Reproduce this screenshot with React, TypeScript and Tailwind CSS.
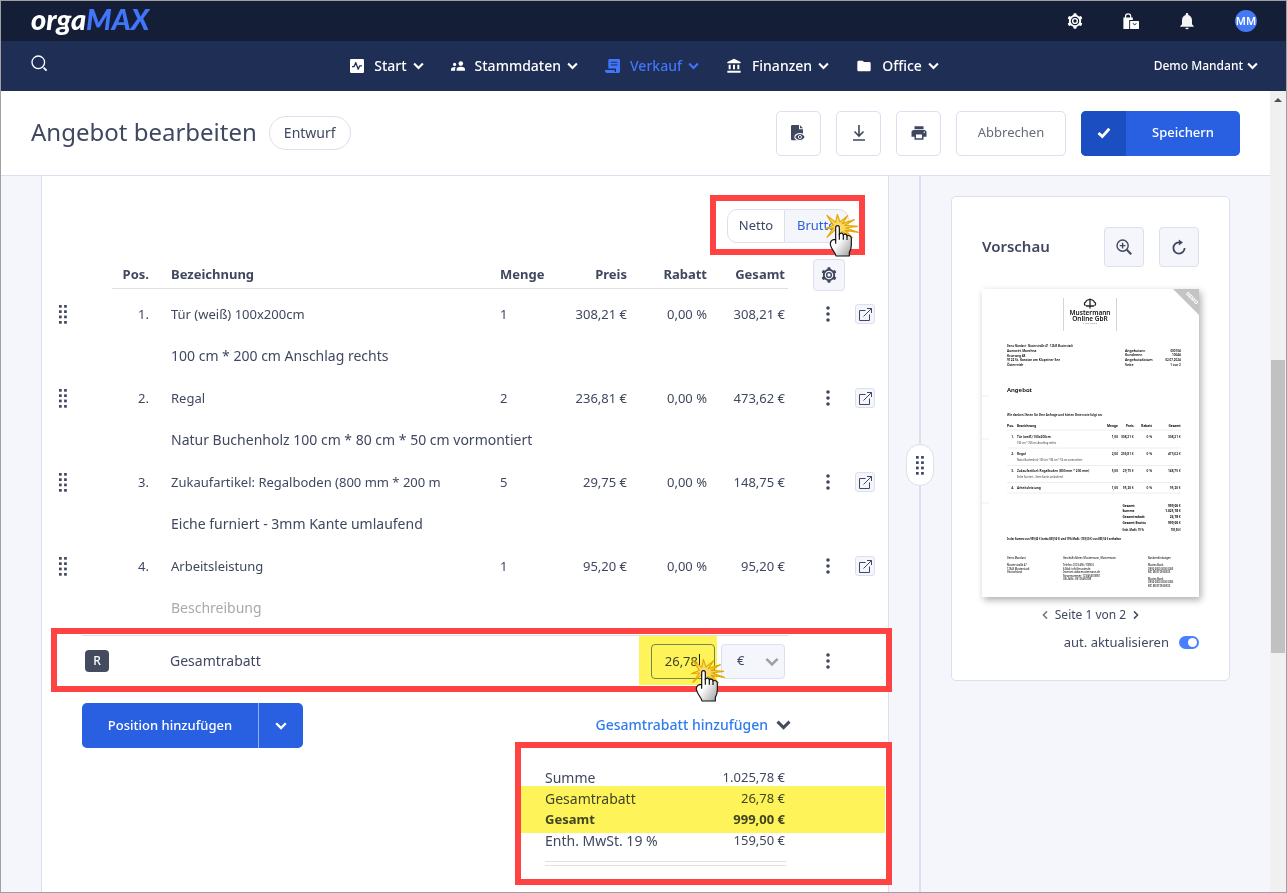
import React from "react";
import { MdAccountBalance, MdFolder, MdNotifications, MdPrint } from "react-icons/md";

function Chevron({ className, width = 2 }: { className?: string; width?: number }) {
  return (
    <svg viewBox="0 0 12 8" fill="none" stroke="currentColor" strokeWidth={width} className={className} aria-hidden="true">
      <path d="M1.2 1.3 6 6.1l4.8-4.8" />
    </svg>
  );
}

function GearIcon() {
  return (
    <svg viewBox="0 0 16 16" fill="none" stroke="currentColor" className="size-4" aria-hidden="true">
      <circle cx="8" cy="8" r="5.200" strokeWidth="1.900" />
      {[0, 60, 120, 180, 240, 300].map((angle) => (
        <path key={angle} d="M6.400 2.800V1.200a.9.900 0 0 1 .9-.9h1.400a.9.900 0 0 1 .9.900v1.600z" transform={`rotate(${angle} 8 8)`} fill="currentColor" stroke="none" />
      ))}
      <circle cx="8" cy="8" r="2.400" strokeWidth="1.400" />
    </svg>
  );
}

function PulseIcon() {
  return (
    <svg viewBox="0 0 14 14" className="size-3.5" aria-hidden="true">
      <rect width="14" height="14" rx="1.2" fill="currentColor" />
      <path d="M2 7.600h2.200l1.600-4 2.400 6.600 1.500-3.400h2.300" fill="none" stroke="#1f2e55" strokeWidth="1.300" strokeLinejoin="round" />
    </svg>
  );
}

function PeopleIcon() {
  return (
    <svg viewBox="0 0 14 14" fill="currentColor" className="size-3.5" aria-hidden="true">
      <circle cx="9.800" cy="4.600" r="2.300" />
      <circle cx="3.600" cy="5.400" r="1.600" />
      <path d="M5.600 11.800V10c0-1.500 2.200-2.200 4.200-2.200S14 8.500 14 10v1.800z" />
      <path d="M0 11.800v-1.600C0 8.700 2 8 4.800 8.100c-.6.600-.7 1.200-.7 2v1.700z" />
    </svg>
  );
}

function ScrollIcon() {
  return (
    <svg viewBox="0 0 15 14" className="h-3.5 w-[15px]" aria-hidden="true">
      <path d="M3.300 9.500V1.200C3.300.5 3.800 0 4.500 0h9.300c.7 0 1.200.5 1.200 1.200v11c0 1-.8 1.800-1.800 1.800H2c-1.100 0-2-.9-2-2v-1h9.500v.6c0 1 .7 1.600 1.500 1.600V9.500z" fill="currentColor" />
      <path d="M5.800 3.200h6.600M5.800 6h6.600" stroke="#1f2e55" strokeWidth="1.100" />
    </svg>
  );
}

function BagsIcon() {
  return (
    <svg viewBox="0 0 16 16" className="size-4" aria-hidden="true">
      <path d="M2.500 5V3.500a2.600 2.600 0 0 1 5.200 0V5" fill="none" stroke="currentColor" strokeWidth="1.200" />
      <path d="M.4 4.600h9.400V7H6.200v9H.4z" fill="currentColor" />
      <rect x="7.100" y="8" width="8.900" height="8" rx=".5" fill="currentColor" />
      <path d="M10.200 10.200c.2 2 2.700 2 2.900 0" fill="none" stroke="#151e37" strokeWidth="1" />
    </svg>
  );
}

function FileEyeIcon() {
  return (
    <svg viewBox="0 0 15 16" className="h-4 w-[15px]" aria-hidden="true">
      <path d="M1.300 0H8v4.300h4v11H1.300A1.300 1.300 0 0 1 0 14V1.300C0 .6.600 0 1.300 0z" fill="currentColor" />
      <path d="M9 .3v3h3z" fill="currentColor" />
      <ellipse cx="8.900" cy="12" rx="5.600" ry="4" fill="#fff" />
      <path d="M4.200 12c2-4 7.400-4 9.400 0-2 4-7.400 4-9.400 0z" fill="currentColor" />
      <circle cx="8.900" cy="12" r="1.600" fill="none" stroke="#fff" strokeWidth=".9" />
    </svg>
  );
}

function DownloadIcon() {
  return (
    <svg viewBox="0 0 14 16" fill="none" stroke="currentColor" strokeWidth="1.600" className="h-4 w-3.5" aria-hidden="true">
      <path d="M7 0v11M2.500 6.500 7 11l4.500-4.500M1 15h12" />
    </svg>
  );
}

function CheckIcon() {
  return (
    <svg viewBox="0 0 14 12" fill="none" stroke="currentColor" strokeWidth="2.800" className="h-3 w-3.5" aria-hidden="true">
      <path d="M1.500 6 5.300 9.600 12.300 1.800" />
    </svg>
  );
}

function SearchIcon() {
  return (
    <svg viewBox="0 0 17 17" fill="none" stroke="currentColor" strokeWidth="1.300" className="size-[17px]" aria-hidden="true">
      <circle cx="7.300" cy="7.300" r="6.300" />
      <path d="m12.600 12.600 3 3" strokeWidth="1.800" />
    </svg>
  );
}

function ZoomInIcon() {
  return (
    <svg viewBox="0 0 16 16" fill="none" stroke="currentColor" strokeWidth="1.400" className="size-4" aria-hidden="true">
      <circle cx="6.600" cy="6.600" r="5.600" />
      <path d="M6.600 3.800v5.600M3.800 6.600h5.600" />
      <path d="m10.800 10.800 4.400 4.400" strokeWidth="2" />
    </svg>
  );
}

function ReloadIcon() {
  return (
    <svg viewBox="0 0 14 16" className="h-4 w-3.5" aria-hidden="true">
      <path d="M8 3.400H6.800A5.600 5.600 0 1 0 12.600 9" fill="none" stroke="currentColor" strokeWidth="1.800" />
      <path d="M6.800.4v6l4.200-3z" fill="currentColor" />
    </svg>
  );
}

function ExternalIcon() {
  return (
    <svg viewBox="0 0 13 13" fill="none" stroke="currentColor" strokeWidth="1" className="size-[13px]" aria-hidden="true">
      <path d="M6.500 2.500h-6v10h10v-6M8 .5h4.500V5M12.500.5l-8 8" />
    </svg>
  );
}

function GripIcon() {
  return (
    <svg viewBox="0 0 8 19" fill="currentColor" className="h-[19px] w-2" aria-hidden="true">
      {[0, 5.300, 10.600, 16].map((y) => (
        <g key={y}>
          <rect x="0" y={y} width="2.700" height="2.700" />
          <rect x="5.100" y={y} width="2.700" height="2.700" />
        </g>
      ))}
    </svg>
  );
}

function DotsIcon() {
  return (
    <svg viewBox="0 0 4 16" fill="currentColor" className="h-4 w-1" aria-hidden="true">
      <circle cx="2" cy="2" r="1.800" />
      <circle cx="2" cy="8" r="1.800" />
      <circle cx="2" cy="14" r="1.800" />
    </svg>
  );
}

function ClickHand({ className }: { className: string }) {
  return (
    <svg viewBox="0 0 105 135" className={className} aria-hidden="true">
      <defs>
        <linearGradient id="hand" x1="0" y1="0" x2="1" y2="1">
          <stop offset=".45" stopColor="#fff" />
          <stop offset="1" stopColor="#9b9b9b" />
        </linearGradient>
      </defs>
      <path
        d="M31 50 6 73l19-28L1 47l24-10L6 7l26 21L37 4l8 23L68 8 52 32 88 20 60 37l38 3-36 5 38 13-40-6 22 22-30-18-8 12-8-12z"
        fill="#f8d96a"
        stroke="#e5a800"
        strokeWidth="3.500"
        strokeLinejoin="round"
      />
      <path
        d="M32 80V44c0-8 11-8 11 0v21c2-7 11-6 12 1 3-5 11-3 11 3 4-3 13-1 13 7v20c0 12-3 17-6 22v11H33c-2-12-18-24-17-38 1-9 9-12 16-12z"
        fill="url(#hand)"
        stroke="#111"
        strokeWidth="3.500"
        strokeLinejoin="round"
      />
      <path d="M32 80v12M43 62v18M55 66v14M66 69v12" fill="none" stroke="#111" strokeWidth="3.500" />
    </svg>
  );
}

const frame = "pointer-events-none absolute border-6 border-[#ff4242]";

const navItems = [
  { label: "Start", icon: <PulseIcon /> },
  { label: "Stammdaten", icon: <PeopleIcon /> },
  { label: "Verkauf", icon: <ScrollIcon />, active: true },
  { label: "Finanzen", icon: <MdAccountBalance className="size-4" /> },
  { label: "Office", icon: <MdFolder className="size-4" /> },
];

const positions = [
  { pos: "1.", name: "Tür (weiß) 100x200cm", qty: "1", price: "308,21 €", discount: "0,00 %", total: "308,21 €", text: "100 cm * 200 cm Anschlag rechts" },
  { pos: "2.", name: "Regal", qty: "2", price: "236,81 €", discount: "0,00 %", total: "473,62 €", text: "Natur Buchenholz 100 cm * 80 cm * 50 cm vormontiert" },
  { pos: "3.", name: "Zukaufartikel: Regalboden (800 mm * 200 m", qty: "5", price: "29,75 €", discount: "0,00 %", total: "148,75 €", text: "Eiche furniert - 3mm Kante umlaufend" },
  { pos: "4.", name: "Arbeitsleistung", qty: "1", price: "95,20 €", discount: "0,00 %", total: "95,20 €", text: "" },
];

function TopBar() {
  return (
    <header className="shrink-0 text-white">
      <div className="flex h-10 items-center justify-between bg-[#151e37] pr-[29px] pl-[30px]">
        <a href="#" className="pb-1 font-[Lato,sans-serif] text-[29px] leading-8 font-black italic">
          orga<span className="text-[#4176fb]">MAX</span>
        </a>
        <div className="flex items-center gap-9">
          <button aria-label="Einstellungen" className="grid size-5 place-items-center"><GearIcon /></button>
          <button aria-label="Shop" className="grid size-5 place-items-center"><BagsIcon /></button>
          <button aria-label="Mitteilungen" className="grid size-5 place-items-center text-gray-100"><MdNotifications className="size-5" /></button>
          <button className="ml-0.5 grid size-[22px] place-items-center rounded-full bg-[#4478f5] text-[11px] leading-4 font-semibold">MM</button>
        </div>
      </div>
      <div className="flex h-[50px] items-center bg-[#1f2e55] pr-7 pl-[30px]">
        <div className="flex flex-1 pb-1.5"><button aria-label="Suchen"><SearchIcon /></button></div>
        <nav className="flex items-center gap-[27px]">
          {navItems.map((item) => (
            <a key={item.label} href="#" className={item.active ? "flex items-center gap-1.5 text-[#4176fb]" : "flex items-center gap-1.5"}>
              <span className="mr-1 flex">{item.icon}</span>
              <span className="text-sm font-medium">{item.label}</span>
              <Chevron width={2.3} className="h-2 w-[11px]" />
            </a>
          ))}
        </nav>
        <div className="flex flex-1 justify-end">
          <button className="flex items-center gap-1 text-xs font-medium">
            Demo Mandant <Chevron width={2.3} className="h-2 w-[11px]" />
          </button>
        </div>
      </div>
    </header>
  );
}

const toolButton = "grid size-[45px] place-items-center rounded-[5px] border border-[#dcdfed] bg-white";

function TitleBar() {
  return (
    <div className="flex h-[85px] shrink-0 items-center justify-between border-b border-[#dcdfed] bg-white px-[30px]">
      <div className="flex items-center gap-3">
        <h1 className="pb-0.5 text-2xl leading-8">Angebot bearbeiten</h1>
        <span className="rounded-full border border-[#dcdfed] px-3.5 py-1.5 text-sm leading-5">Entwurf</span>
      </div>
      <div className="flex items-center gap-[15px]">
        <button aria-label="Vorschau anzeigen" className={toolButton}><FileEyeIcon /></button>
        <button aria-label="Herunterladen" className={toolButton}><DownloadIcon /></button>
        <button aria-label="Drucken" className={toolButton}><MdPrint className="size-[18px]" /></button>
        <button className="h-[45px] w-[110px] rounded-[5px] border border-[#dcdfed] text-[13px] text-[#666b78]">Abbrechen</button>
        <button className="flex h-[45px] items-center overflow-hidden rounded-[5px] bg-[#2860e1] text-[13px] font-medium text-white">
          <span className="grid h-full w-[45px] place-items-center bg-[#1b4fc1]"><CheckIcon /></span>
          <span className="w-[114px]">Speichern</span>
        </button>
      </div>
    </div>
  );
}

const headCell = "h-[30px] border-b border-[#e0e0e0] pt-[5px]";

function PositionTable() {
  return (
    <table className="w-full table-fixed text-[13px] leading-5">
      <colgroup>
        <col className="w-[70px]" />
        <col className="w-12" />
        <col />
        <col className="w-[60px]" />
        <col className="w-[67px]" />
        <col className="w-20" />
        <col className="w-[81px]" />
        <col className="w-[100px]" />
      </colgroup>
      <thead>
        <tr className="h-[34px] align-top">
          <td />
          <th><div className={`${headCell} pr-[11px] text-right`}>Pos.</div></th>
          <th><div className={`${headCell} pl-[11px] text-left`}>Bezeichnung</div></th>
          <th><div className={`${headCell} text-left`}>Menge</div></th>
          <th><div className={`${headCell} text-right`}>Preis</div></th>
          <th><div className={`${headCell} text-right`}>Rabatt</div></th>
          <th><div className={`${headCell} pr-[3px] text-right`}>Gesamt</div></th>
          <td className="pl-[25px]">
            <button aria-label="Spalten einstellen" className="grid size-8 place-items-center rounded-[4px] border border-[#dcdfed] bg-[#f5f6fb]">
              <GearIcon />
            </button>
          </td>
        </tr>
      </thead>
      <tbody>
        {positions.map((p) => (
          <React.Fragment key={p.pos}>
            <tr className="h-[42px]">
              <td className="pl-[17px]"><GripIcon /></td>
              <td className="pr-[11px] text-right">{p.pos}</td>
              <td className="pl-[11px] whitespace-nowrap">{p.name}</td>
              <td>{p.qty}</td>
              <td className="text-right">{p.price}</td>
              <td className="text-right">{p.discount}</td>
              <td className="pr-[3px] text-right">{p.total}</td>
              <td>
                <div className="flex items-center gap-[11px] pl-6">
                  <button aria-label="Aktionen" className="grid h-5 w-8 place-items-center"><DotsIcon /></button>
                  <button aria-label="Artikel öffnen" className="grid size-5 place-items-center rounded-[3px] border border-[#dcdfed] bg-[#f5f6fb]"><ExternalIcon /></button>
                </div>
              </td>
            </tr>
            <tr className="h-[42px] text-sm">
              <td />
              <td />
              <td colSpan={5} className="pl-[11px]">
                {p.text || <input aria-label="Beschreibung" placeholder="Beschreibung" className="block w-full leading-5 outline-none placeholder:text-[#a9a9a9]" />}
              </td>
              <td />
            </tr>
          </React.Fragment>
        ))}
      </tbody>
    </table>
  );
}

function Editor() {
  return (
    <section className="min-w-0 flex-1 border-x border-[#dcdfed] bg-white pt-[33px]">
      <div className="mb-4 flex justify-end pr-[39px]">
        <div className="relative flex h-[34px] text-[13px]">
          <button className="w-[58px] rounded-l-[10px] border border-[#dcdfed]">Netto</button>
          <button className="w-16 rounded-r-[10px] border border-l-0 border-[#dcdfed] bg-[#f5f6fb] text-[#2860e1]">Brutto</button>
          <div className={`${frame} -top-3.5 -right-4 -bottom-3 -left-[17px]`} />
          <ClickHand className="pointer-events-none absolute top-1 left-[98px] h-[45px] w-[35px]" />
        </div>
      </div>

      <PositionTable />

      <div className="relative mt-1.5 flex h-[51px] items-center pt-px pr-[103px] pl-10">
        <div className="absolute top-0 right-[100px] left-10 h-px bg-[#e0e0e0]" />
        <span className="ml-[3px] grid h-[22px] w-6 place-items-center rounded-[4px] bg-[#444b5f] text-xs font-medium text-white">R</span>
        <label htmlFor="discount" className="ml-[61px] flex-1 text-sm">Gesamtrabatt</label>
        <div className="relative flex text-[13px]">
          <input id="discount" defaultValue="26,78" className="h-[35px] w-16 rounded-[4px] border border-[#728fd0] pr-4 text-right outline-none" />
          <div className="absolute top-2.5 right-[15px] h-3.5 w-px bg-[#222]" />
          <div className="pointer-events-none absolute -top-2 -right-0.5 -bottom-1.5 -left-3 bg-[#fff35a] mix-blend-multiply" />
          <ClickHand className="pointer-events-none absolute top-3.5 left-10 z-10 h-[45px] w-[35px]" />
        </div>
        <div className="relative ml-1.5">
          <select aria-label="Einheit" className="block h-[35px] w-16 appearance-none rounded-[4px] border border-[#dcdfed] bg-[#f5f6fb] pl-[15px] text-[13px]">
            <option>€</option>
            <option>%</option>
          </select>
          <Chevron width={2.2} className="pointer-events-none absolute top-[13px] right-1.5 h-2.5 w-3.5 text-[#a0a0a0]" />
        </div>
        <button aria-label="Aktionen" className="absolute right-11 grid h-5 w-8 place-items-center"><DotsIcon /></button>
        <div className={`${frame} -top-[7px] -right-1 -bottom-1.5 left-[9px]`} />
      </div>

      <div className="mt-[17px] flex items-center justify-between pr-[97px] pl-10">
        <div className="flex h-[45px] overflow-hidden rounded-[5px] bg-[#2860e1] text-[13px] font-medium text-white">
          <button className="w-44">Position hinzufügen</button>
          <button aria-label="Weitere Positionsarten" className="grid w-[45px] place-items-center border-l border-[#93aff0]"><Chevron width={2.3} className="h-2 w-3" /></button>
        </div>
        <button className="flex items-center gap-2 pb-0.5 text-sm font-medium text-[#2f7cee]">
          Gesamtrabatt hinzufügen <Chevron width={2.4} className="h-2.5 w-[15px] text-[#444b5f]" />
        </button>
      </div>

      <div className="relative mt-[19px] mr-[102px] ml-auto w-[241px]">
        <table className="w-full text-[13px] leading-[21px]">
          <tbody>
            <tr><td className="text-sm leading-[21px]">Summe</td><td className="pr-px text-right">1.025,78 €</td></tr>
            <tr><td className="text-sm leading-[21px]">Gesamtrabatt</td><td className="pr-px text-right">26,78 €</td></tr>
            <tr className="font-bold"><td>Gesamt</td><td className="pr-px text-right">999,00 €</td></tr>
            <tr><td className="text-sm leading-[21px]">Enth. MwSt. 19 %</td><td className="pr-px text-right">159,50 €</td></tr>
          </tbody>
        </table>
        <div className="mt-2.5 h-[5px] border-y border-[#e0e0e0]" />
        <div className="pointer-events-none absolute top-[19px] -right-[99px] -left-6 h-[47px] bg-[#fff35a] mix-blend-multiply" />
        <div className={`${frame} -top-[25px] -right-[106px] -bottom-[19px] -left-[30px]`} />
      </div>
    </section>
  );
}

const miniRows = [
  { y: 148.500, pos: "1.", name: "Tür (weiß) 100x200cm", qty: "1,00", price: "308,21 €", total: "308,21 €", text: "100 cm * 200 cm Anschlag rechts" },
  { y: 165.700, pos: "2.", name: "Regal", qty: "2,00", price: "236,81 €", total: "473,62 €", text: "Natur Buchenholz 100 cm * 80 cm * 50 cm vormontiert" },
  { y: 182.700, pos: "3.", name: "Zukaufartikel: Regalboden (800 mm * 200 mm)", qty: "5,00", price: "29,75 €", total: "148,75 €", text: "Eiche furniert - 3mm Kante umlaufend" },
  { y: 199.700, pos: "4.", name: "Arbeitsleistung", qty: "1,00", price: "95,20 €", total: "95,20 €", text: "" },
];

function MiniLines({ x, y, step, lines }: { x: number; y: number; step: number; lines: string[] }) {
  return (
    <>
      {lines.map((line, i) => (
        <text key={i} x={x} y={y + i * step}>{line}</text>
      ))}
    </>
  );
}

function DocumentThumbnail() {
  return (
    <svg viewBox="0 0 217 308" role="img" aria-label="Angebot, Seite 1" className="mt-[22px] block w-full bg-white font-['Noto_Sans',sans-serif] shadow-[2px_3px_7px_rgba(0,0,0,0.32)]">
      <path d="M191 0h26v26z" fill="#c4c4c4" />
      <text transform="translate(203.500 5) rotate(45)" fontSize="5" fontWeight="800" fill="#fff">DEMO</text>
      <path d="M81.500 9v33M134.500 9v33" stroke="#d4d4d4" strokeWidth="1" />
      <path
        d="M108 9.500v10M104 17h8M103.500 16.800c-1.500-.8-1.500-3.300.2-3.600.5-2.200 3-2.800 4.300-2.400 1.300-.4 3.800.2 4.300 2.400 1.700.3 1.700 2.800.2 3.600"
        fill="none"
        stroke="#222"
        strokeWidth="1.300"
      />
      <g textAnchor="middle" fill="#111">
        <text fontSize="6.500" fontWeight="600">
          <tspan x="108" y="25.500">Mustermann</tspan>
          <tspan x="108" y="31.500">Online GbR</tspan>
        </text>
        <text x="108" y="35" fontSize="2.500" fill="#555">F l a t l a n d</text>
      </g>
      <g fill="#000" fontSize="3.500" fontWeight="600">
        <text x="25" y="57.500" fontSize="2.500">Demo Mandant · Musterstraße 47 · 12345 Musterstadt</text>
        <g fontSize="3.200"><MiniLines x={25} y={63} step={4.500} lines={["Auenwirt Maechna", "Kronweg 48", "9122 St. Kanzian am Klopeiner See", "Österreich"]} /></g>
        <MiniLines x={143} y={62.500} step={4.700} lines={["Angebotsnr.", "Kundennr.", "Angebotsdatum", "Seite"]} />
        <g textAnchor="end" fontSize="3"><MiniLines x={198.700} y={62.500} step={4.700} lines={["000104", "10044", "02.07.2024", "1 von 2"]} /></g>
        <text x="25" y="103" fontSize="6">Angebot</text>
        <text x="25" y="126.500" fontSize="3">Wir danken Ihnen für Ihre Anfrage und bieten Ihnen wie folgt an:</text>
        <g fontWeight="700">
          <text x="25" y="137.500">Pos.</text>
          <text x="35" y="137.500" fontSize="3">Bezeichnung</text>
          <g textAnchor="end" fontSize="3.200">
            <text x="136" y="137.500">Menge</text>
            <text x="151.700" y="137.500">Preis</text>
            <text x="170" y="137.500">Rabatt</text>
            <text x="198.700" y="137.500">Gesamt</text>
          </g>
        </g>
        {miniRows.map((r) => (
          <g key={r.pos}>
            <text x="35" y={r.y} fontSize="3.200">{r.name}</text>
            {r.text && <text x="35" y={r.y + 6.500} fontSize="2.500" fontWeight="500" fill="#555">{r.text}</text>}
            <g textAnchor="end" fontSize="3.200">
              <text x="32" y={r.y}>{r.pos}</text>
              <text x="136" y={r.y}>{r.qty}</text>
              <text x="151.700" y={r.y}>{r.price}</text>
              <text x="170" y={r.y}>0 %</text>
              <text x="198.700" y={r.y}>{r.total}</text>
            </g>
          </g>
        ))}
        <g fontWeight="700" fontSize="3.200">
          <MiniLines x={140.500} y={217.700} step={5.600} lines={["Gesamt", "Summe", "Gesamtrabatt", "Gesamt Brutto"]} />
          <text x="140.500" y="242" fontSize="2.500">Enth. MwSt. 19 %</text>
          <g textAnchor="end">
            <MiniLines x={198.700} y={217.700} step={5.600} lines={["999,00 €", "1.025,78 €", "26,78 €", "999,00 €"]} />
            <text x="198.700" y="242" fontSize="2.500">159,50 €</text>
          </g>
          <text x="25" y="251" fontSize="2.500">In der Summe von 999,00 € (netto 839,50 €) sind 19% MwSt. (159,50 €) von 839,50 € enthalten</text>
        </g>
      </g>
      <g fill="#111" fontSize="2.500" fontWeight="500">
        <MiniLines x={25} y={270} step={7} lines={["Demo Mandant", "Musterstraße 47"]} />
        <MiniLines x={25} y={280.500} step={3.500} lines={["12345 Musterstadt", "Deutschland"]} />
        <text x="81" y="270">Geschäftsführer: Mustermann, Mustermann</text>
        <MiniLines x={81} y={277} step={3.500} lines={["Telefon: 0123 456 / 7890 0", "E-Mail: info@muster.de", "Internet: www.mustermann.de", "Steuernummer: 123/456/78901", "USt-IdNr.: DE123456789"]} />
        <text x="166" y="270">Bankverbindungen</text>
        <MiniLines x={166} y={277} step={3.500} lines={["Muster-Bank", "DE00 0000 0000 0000", "BIC MUSTDE00XXX"]} />
        <MiniLines x={166} y={290.500} step={3.500} lines={["Muster-Bank", "DE00 0000 0000 0000", "BIC MUSTDE00XXX"]} />
      </g>
      <path d="M25 141h174M25 159h174M25 176.500h174M25 193.500h174M25 204h174M0 107h7M0 150h7M0 214h7" stroke="#eee" strokeWidth="1" />
    </svg>
  );
}

const previewButton = "grid size-10 place-items-center rounded-[4px] border border-[#dcdfed] bg-[#f5f6fb]";

function Preview() {
  return (
    <aside className="w-[279px] shrink-0 self-start rounded-[5px] border border-[#dcdfed] bg-white px-[30px] pt-[30px] pb-7">
      <div className="flex items-center gap-[15px]">
        <h2 className="flex-1 pb-0.5 text-[15px] font-semibold">Vorschau</h2>
        <button aria-label="Vergrößern" className={previewButton}><ZoomInIcon /></button>
        <button aria-label="Aktualisieren" className={previewButton}><ReloadIcon /></button>
      </div>
      <DocumentThumbnail />
      <div className="mt-2 flex items-center justify-center gap-1 text-xs leading-5">
        <button aria-label="Vorherige Seite"><Chevron className="h-2 w-3 rotate-90 scale-75 text-[#777]" /></button>
        Seite 1 von 2
        <button aria-label="Nächste Seite"><Chevron className="h-2 w-3 -rotate-90 scale-75" /></button>
      </div>
      <label className="mt-[7px] flex items-center justify-end gap-2.5 text-[13px] leading-5">
        aut. aktualisieren
        <input type="checkbox" role="switch" defaultChecked className="peer sr-only" />
        <span className="flex h-[13px] w-5 items-center justify-end rounded-full bg-[#4680ff] px-0.5">
          <span className="size-[9px] rounded-full bg-white" />
        </span>
      </label>
    </aside>
  );
}

export default function App() {
  return (
    <div className="flex h-screen flex-col overflow-hidden border border-[#a0a0a0] bg-white font-['Noto_Sans',sans-serif] text-[#404860]">
      <TopBar />
      <div className="flex min-h-0 flex-1">
        <main className="flex min-w-0 flex-1 flex-col">
          <TitleBar />
          <div className="flex min-h-0 flex-1 overflow-hidden bg-[#f5f6fb] pr-10 pl-10">
            <Editor />
            <div className="relative mx-[30px] w-0.5 shrink-0 bg-[#dcdfed]">
              <button aria-label="Breite anpassen" className="absolute top-[268px] -left-[13px] grid h-[42px] w-7 place-items-center rounded-full border border-[#dcdfed] bg-white">
                <GripIcon />
              </button>
            </div>
            <div className="flex pt-5"><Preview /></div>
          </div>
        </main>
        <div className="flex w-4 shrink-0 flex-col items-center bg-[#f0f0f0]" aria-hidden="true">
          <svg viewBox="0 0 8 4" className="mt-[7px] h-1 w-2"><path d="M4 0l4 4H0z" fill="#505050" /></svg>
          <div className="mt-[258px] h-[293px] w-3.5 bg-[#c1c1c1]" />
        </div>
      </div>
    </div>
  );
}
